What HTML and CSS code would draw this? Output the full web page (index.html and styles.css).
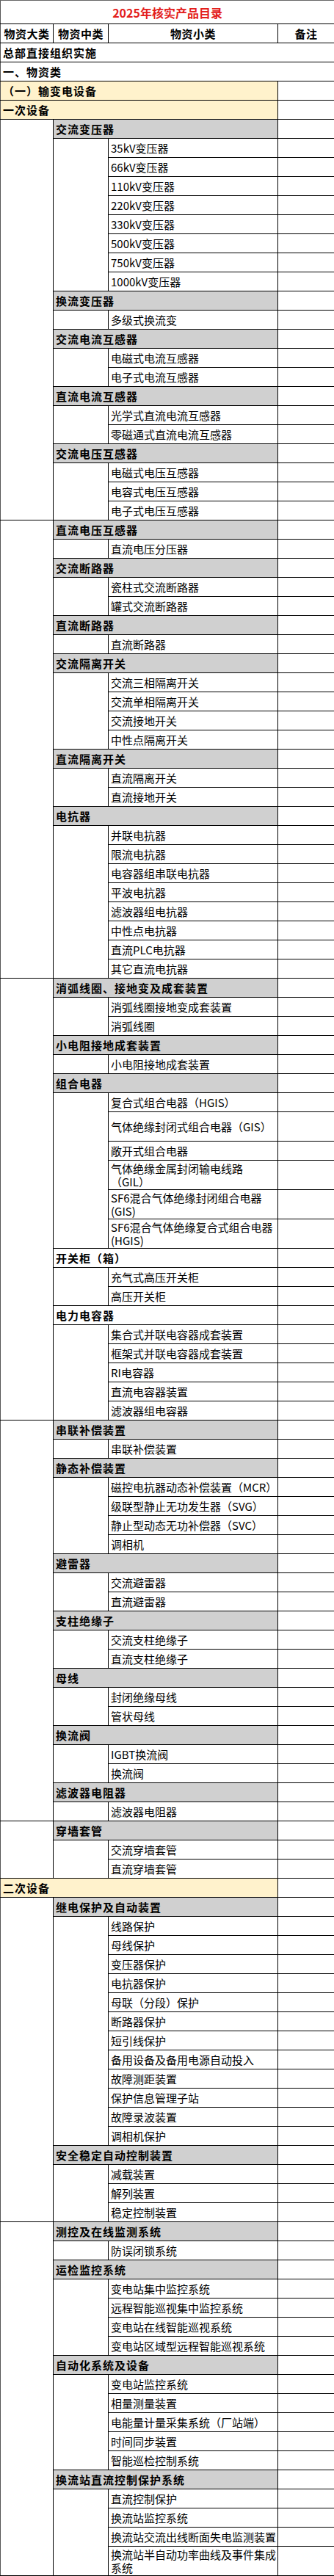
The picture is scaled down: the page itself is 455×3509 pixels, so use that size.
FILE: index.html
```html
<!DOCTYPE html>
<html lang="zh-CN">
<head>
<meta charset="utf-8">
<title>2025年核实产品目录</title>
<link rel="stylesheet" href="styles.css">
</head>
<body>
<table class="catalog">
<colgroup><col class="c1"><col class="c2"><col class="c3"><col class="c4"></colgroup>
<tr class="title-row"><td class="title" colspan="4">2025年核实产品目录</td></tr>
<tr><th>物资大类</th><th>物资中类</th><th>物资小类</th><th>备注</th></tr>
<tr><td class="top" colspan="4">总部直接组织实施</td></tr>
<tr><td class="top" colspan="4">一、物资类</td></tr>
<tr><td class="sec" colspan="3">（一）输变电设备</td><td></td></tr>
<tr><td class="sec" colspan="3">一次设备</td><td></td></tr>

<tr><td rowspan="21"></td><td class="cat" colspan="2">交流变压器</td><td></td></tr>
<tr><td rowspan="8"></td><td class="item">35kV变压器</td><td></td></tr>
<tr><td class="item">66kV变压器</td><td></td></tr>
<tr><td class="item">110kV变压器</td><td></td></tr>
<tr><td class="item">220kV变压器</td><td></td></tr>
<tr><td class="item">330kV变压器</td><td></td></tr>
<tr><td class="item">500kV变压器</td><td></td></tr>
<tr><td class="item">750kV变压器</td><td></td></tr>
<tr><td class="item">1000kV变压器</td><td></td></tr>
<tr><td class="cat" colspan="2">换流变压器</td><td></td></tr>
<tr><td></td><td class="item">多级式换流变</td><td></td></tr>
<tr><td class="cat" colspan="2">交流电流互感器</td><td></td></tr>
<tr><td rowspan="2"></td><td class="item">电磁式电流互感器</td><td></td></tr>
<tr><td class="item">电子式电流互感器</td><td></td></tr>
<tr><td class="cat" colspan="2">直流电流互感器</td><td></td></tr>
<tr><td rowspan="2"></td><td class="item">光学式直流电流互感器</td><td></td></tr>
<tr><td class="item">零磁通式直流电流互感器</td><td></td></tr>
<tr><td class="cat" colspan="2">交流电压互感器</td><td></td></tr>
<tr><td rowspan="3"></td><td class="item">电磁式电压互感器</td><td></td></tr>
<tr><td class="item">电容式电压互感器</td><td></td></tr>
<tr><td class="item">电子式电压互感器</td><td></td></tr>

<tr><td rowspan="24"></td><td class="cat" colspan="2">直流电压互感器</td><td></td></tr>
<tr><td></td><td class="item">直流电压分压器</td><td></td></tr>
<tr><td class="cat" colspan="2">交流断路器</td><td></td></tr>
<tr><td rowspan="2"></td><td class="item">瓷柱式交流断路器</td><td></td></tr>
<tr><td class="item">罐式交流断路器</td><td></td></tr>
<tr><td class="cat" colspan="2">直流断路器</td><td></td></tr>
<tr><td></td><td class="item">直流断路器</td><td></td></tr>
<tr><td class="cat" colspan="2">交流隔离开关</td><td></td></tr>
<tr><td rowspan="4"></td><td class="item">交流三相隔离开关</td><td></td></tr>
<tr><td class="item">交流单相隔离开关</td><td></td></tr>
<tr><td class="item">交流接地开关</td><td></td></tr>
<tr><td class="item">中性点隔离开关</td><td></td></tr>
<tr><td class="cat" colspan="2">直流隔离开关</td><td></td></tr>
<tr><td rowspan="2"></td><td class="item">直流隔离开关</td><td></td></tr>
<tr><td class="item">直流接地开关</td><td></td></tr>
<tr><td class="cat" colspan="2">电抗器</td><td></td></tr>
<tr><td rowspan="8"></td><td class="item">并联电抗器</td><td></td></tr>
<tr><td class="item">限流电抗器</td><td></td></tr>
<tr><td class="item">电容器组串联电抗器</td><td></td></tr>
<tr><td class="item">平波电抗器</td><td></td></tr>
<tr><td class="item">滤波器组电抗器</td><td></td></tr>
<tr><td class="item">中性点电抗器</td><td></td></tr>
<tr><td class="item">直流PLC电抗器</td><td></td></tr>
<tr><td class="item">其它直流电抗器</td><td></td></tr>

<tr><td rowspan="21"></td><td class="cat" colspan="2">消弧线圈、接地变及成套装置</td><td></td></tr>
<tr><td rowspan="2"></td><td class="item">消弧线圈接地变成套装置</td><td></td></tr>
<tr><td class="item">消弧线圈</td><td></td></tr>
<tr><td class="cat" colspan="2">小电阻接地成套装置</td><td></td></tr>
<tr><td></td><td class="item">小电阻接地成套装置</td><td></td></tr>
<tr><td class="cat" colspan="2">组合电器</td><td></td></tr>
<tr><td rowspan="6"></td><td class="item">复合式组合电器（HGIS）</td><td></td></tr>
<tr class="tall"><td class="item">气体绝缘封闭式组合电器（GIS）</td><td></td></tr>
<tr><td class="item">敞开式组合电器</td><td></td></tr>
<tr class="tall"><td class="item">气体绝缘金属封闭输电线路<br>（GIL）</td><td></td></tr>
<tr class="tall"><td class="item">SF6混合气体绝缘封闭组合电器<br>(GIS)</td><td></td></tr>
<tr class="tall"><td class="item">SF6混合气体绝缘复合式组合电器<br>(HGIS)</td><td></td></tr>
<tr><td class="cat plain" colspan="2">开关柜（箱）</td><td></td></tr>
<tr><td rowspan="2"></td><td class="item">充气式高压开关柜</td><td></td></tr>
<tr><td class="item">高压开关柜</td><td></td></tr>
<tr><td class="cat plain" colspan="2">电力电容器</td><td></td></tr>
<tr><td rowspan="5"></td><td class="item">集合式并联电容器成套装置</td><td></td></tr>
<tr><td class="item">框架式并联电容器成套装置</td><td></td></tr>
<tr><td class="item">RI电容器</td><td></td></tr>
<tr><td class="item">直流电容器装置</td><td></td></tr>
<tr><td class="item">滤波器组电容器</td><td></td></tr>

<tr><td rowspan="21"></td><td class="cat" colspan="2">串联补偿装置</td><td></td></tr>
<tr><td></td><td class="item">串联补偿装置</td><td></td></tr>
<tr><td class="cat" colspan="2">静态补偿装置</td><td></td></tr>
<tr><td rowspan="4"></td><td class="item">磁控电抗器动态补偿装置（MCR）</td><td></td></tr>
<tr><td class="item">级联型静止无功发生器（SVG）</td><td></td></tr>
<tr><td class="item">静止型动态无功补偿器（SVC）</td><td></td></tr>
<tr><td class="item">调相机</td><td></td></tr>
<tr><td class="cat" colspan="2">避雷器</td><td></td></tr>
<tr><td rowspan="2"></td><td class="item">交流避雷器</td><td></td></tr>
<tr><td class="item">直流避雷器</td><td></td></tr>
<tr><td class="cat" colspan="2">支柱绝缘子</td><td></td></tr>
<tr><td rowspan="2"></td><td class="item">交流支柱绝缘子</td><td></td></tr>
<tr><td class="item">直流支柱绝缘子</td><td></td></tr>
<tr><td class="cat" colspan="2">母线</td><td></td></tr>
<tr><td rowspan="2"></td><td class="item">封闭绝缘母线</td><td></td></tr>
<tr><td class="item">管状母线</td><td></td></tr>
<tr><td class="cat" colspan="2">换流阀</td><td></td></tr>
<tr><td rowspan="2"></td><td class="item">IGBT换流阀</td><td></td></tr>
<tr><td class="item">换流阀</td><td></td></tr>
<tr><td class="cat" colspan="2">滤波器电阻器</td><td></td></tr>
<tr><td></td><td class="item">滤波器电阻器</td><td></td></tr>

<tr><td rowspan="3"></td><td class="cat" colspan="2">穿墙套管</td><td></td></tr>
<tr><td rowspan="2"></td><td class="item">交流穿墙套管</td><td></td></tr>
<tr><td class="item">直流穿墙套管</td><td></td></tr>

<tr><td class="sec" colspan="3">二次设备</td><td></td></tr>

<tr><td rowspan="17"></td><td class="cat" colspan="2">继电保护及自动装置</td><td></td></tr>
<tr><td rowspan="12"></td><td class="item">线路保护</td><td></td></tr>
<tr><td class="item">母线保护</td><td></td></tr>
<tr><td class="item">变压器保护</td><td></td></tr>
<tr><td class="item">电抗器保护</td><td></td></tr>
<tr><td class="item">母联（分段）保护</td><td></td></tr>
<tr><td class="item">断路器保护</td><td></td></tr>
<tr><td class="item">短引线保护</td><td></td></tr>
<tr><td class="item">备用设备及备用电源自动投入</td><td></td></tr>
<tr><td class="item">故障测距装置</td><td></td></tr>
<tr><td class="item">保护信息管理子站</td><td></td></tr>
<tr><td class="item">故障录波装置</td><td></td></tr>
<tr><td class="item">调相机保护</td><td></td></tr>
<tr><td class="cat" colspan="2">安全稳定自动控制装置</td><td></td></tr>
<tr><td rowspan="3"></td><td class="item">减载装置</td><td></td></tr>
<tr><td class="item">解列装置</td><td></td></tr>
<tr><td class="item">稳定控制装置</td><td></td></tr>

<tr><td rowspan="18"></td><td class="cat" colspan="2">测控及在线监测系统</td><td></td></tr>
<tr><td></td><td class="item">防误闭锁系统</td><td></td></tr>
<tr><td class="cat" colspan="2">运检监控系统</td><td></td></tr>
<tr><td rowspan="4"></td><td class="item">变电站集中监控系统</td><td></td></tr>
<tr><td class="item">远程智能巡视集中监控系统</td><td></td></tr>
<tr><td class="item">变电站在线智能巡视系统</td><td></td></tr>
<tr><td class="item">变电站区域型远程智能巡视系统</td><td></td></tr>
<tr><td class="cat" colspan="2">自动化系统及设备</td><td></td></tr>
<tr><td rowspan="5"></td><td class="item">变电站监控系统</td><td></td></tr>
<tr><td class="item">相量测量装置</td><td></td></tr>
<tr><td class="item">电能量计量采集系统（厂站端）</td><td></td></tr>
<tr><td class="item">时间同步装置</td><td></td></tr>
<tr><td class="item">智能巡检控制系统</td><td></td></tr>
<tr><td class="cat" colspan="2">换流站直流控制保护系统</td><td></td></tr>
<tr><td rowspan="4"></td><td class="item">直流控制保护</td><td></td></tr>
<tr><td class="item">换流站监控系统</td><td></td></tr>
<tr><td class="item">换流站交流出线断面失电监测装置</td><td></td></tr>
<tr class="tall"><td class="item">换流站半自动功率曲线及事件集成<br>系统</td><td></td></tr>
</table>
</body>
</html>
```
FILE: styles.css
```css
html, body {
  margin: 0;
  padding: 0;
  background: #ffffff;
}

body {
  font-family: "Noto Sans CJK SC", "Noto Sans", sans-serif;
  color: #000000;
}

.catalog {
  border-collapse: collapse;
  table-layout: fixed;
  width: 455px;
  font-size: 15px;
  line-height: 18px;
}

.c1 { width: 72px; }
.c2 { width: 75px; }
.c3 { width: 231px; }
.c4 { width: 77px; }

.catalog tr {
  height: 26px;
}

.catalog tr.tall {
  height: 40px;
}

.catalog tr.title-row {
  height: 32px;
}

.catalog td,
.catalog th {
  border: 1px solid #000000;
  padding: 0 0 0 3px;
  vertical-align: middle;
  white-space: nowrap;
  overflow: hidden;
  text-align: left;
  font-weight: 400;
}

.catalog .title {
  text-align: center;
  color: #e3201b;
  font-weight: 700;
  font-size: 16px;
  padding: 0;
  border-top-color: #666666;
}

.catalog td:first-child,
.catalog th:first-child {
  border-left-color: #555555;
}

.catalog th {
  text-align: center;
  font-weight: 700;
  letter-spacing: 0.5px;
  padding: 0;
}

.catalog .top {
  font-weight: 700;
  letter-spacing: 1px;
}

.catalog .sec {
  background: #fff2cc;
  font-weight: 700;
  letter-spacing: 1px;
}

.catalog .cat {
  background: #d0d0d0;
  font-weight: 700;
  letter-spacing: 1px;
}

.catalog .cat.plain {
  background: #ffffff;
}

.catalog .item {
  padding-left: 3px;
}
```
